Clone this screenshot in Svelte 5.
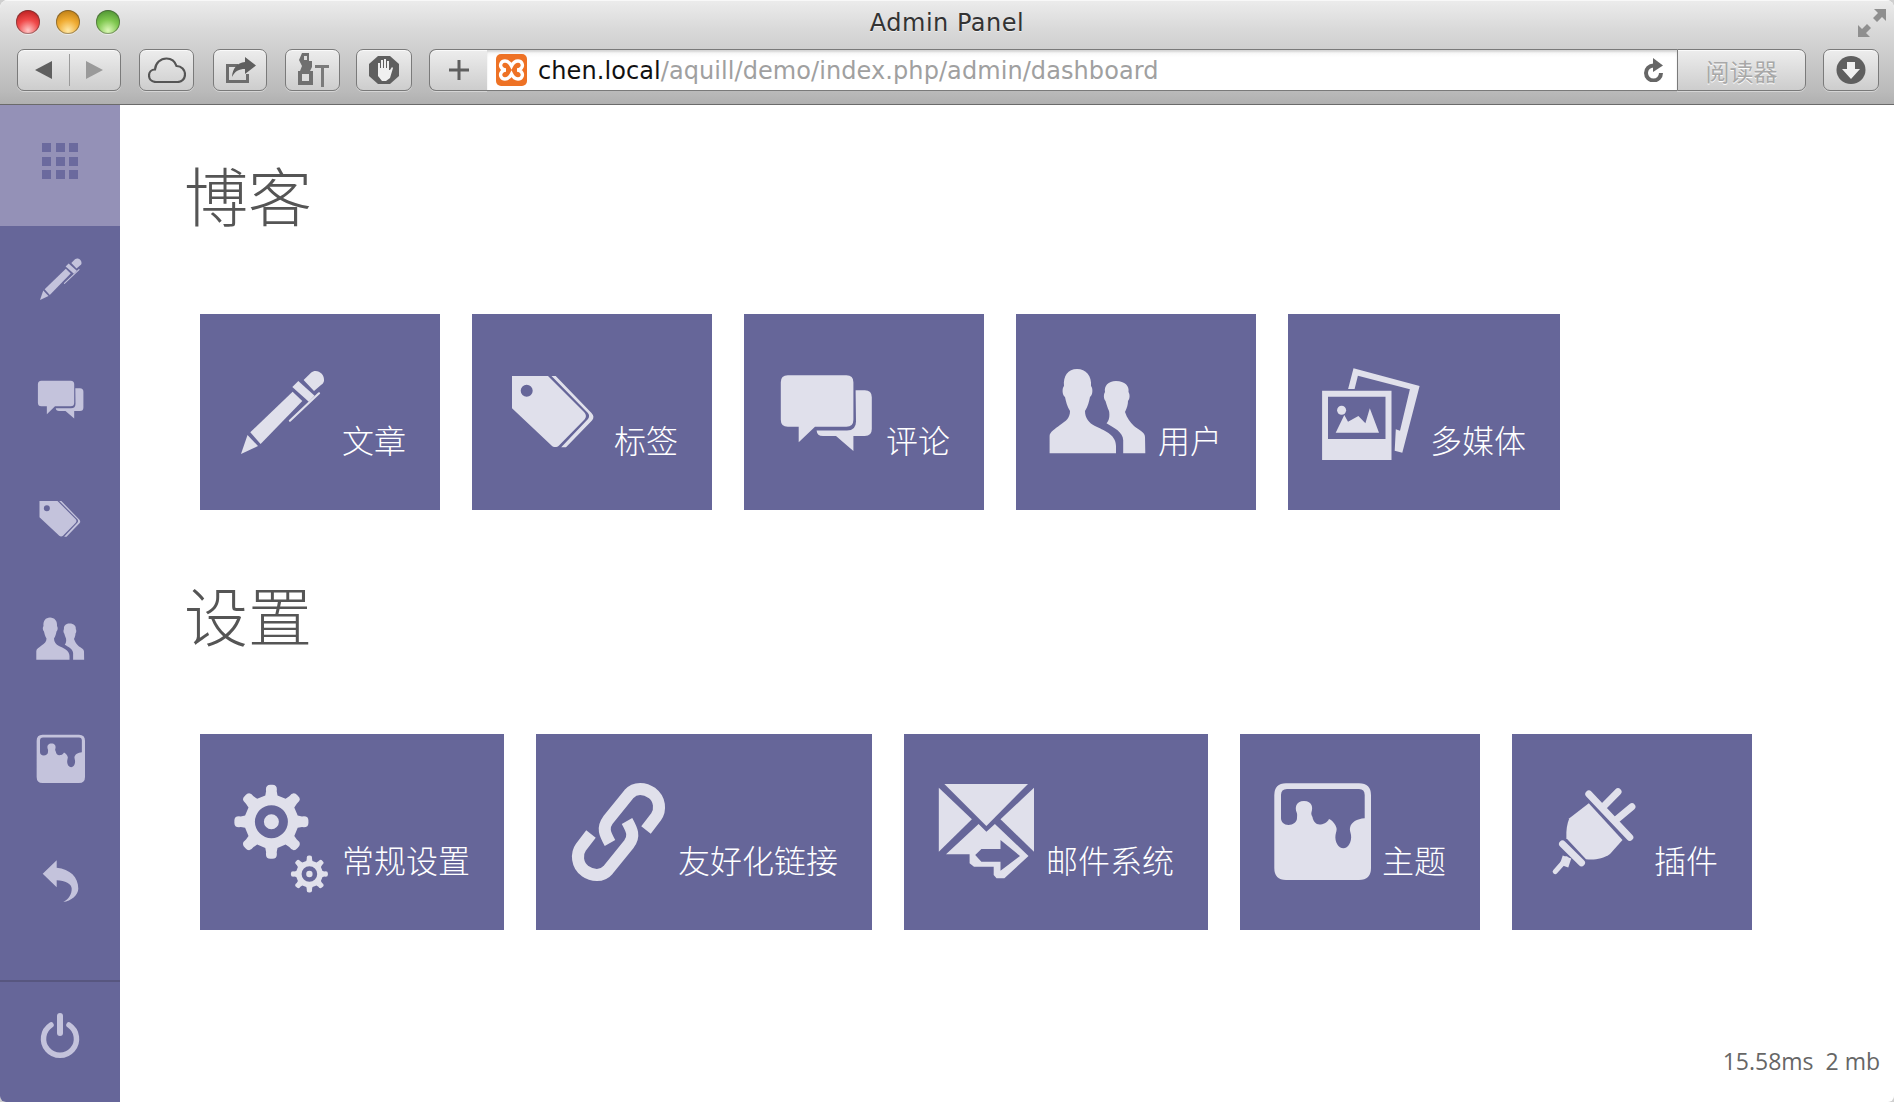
<script>
  // gear outline with rounded teeth, ring hole and centre dot (drawn even-odd)
  function circle(cx, cy, r) {
    return `M${cx - r} ${cy}a${r} ${r} 0 1 0 ${2 * r} 0a${r} ${r} 0 1 0 ${-2 * r} 0Z`;
  }

  function gear(cx, cy, R, r, n, hole, dot) {
    const pt = (a, rad) => `${(cx + Math.cos(a) * rad).toFixed(1)} ${(cy + Math.sin(a) * rad).toFixed(1)}`;
    let d = "";
    for (let i = 0; i < n; i++) {
      const a = (i * 2 * Math.PI) / n - Math.PI / 2;
      const w = 0.17;
      d += `${i ? "L" : "M"}${pt(a - w * 1.35, r)}`;
      d += `L${pt(a - w, R * 0.84)}`;
      d += `Q${pt(a - w, R * 1.03)} ${pt(a, R)}`;
      d += `Q${pt(a + w, R * 1.03)} ${pt(a + w, R * 0.84)}`;
      d += `L${pt(a + w * 1.35, r)}`;
    }
    return d + "Z" + circle(cx, cy, hole) + circle(cx, cy, dot);
  }

  const gearsPath = gear(38.4, 37.7, 37, 27, 8, 16.5, 7.5) + gear(76.4, 90, 18.5, 13.5, 8, 7.8, 3.2);

  const sections = [
    {
      title: "博客",
      items: [
        { icon: "pen", label: "文章" },
        { icon: "tag", label: "标签" },
        { icon: "chat", label: "评论" },
        { icon: "users", label: "用户" },
        { icon: "media", label: "多媒体" },
      ],
    },
    {
      title: "设置",
      items: [
        { icon: "gears", label: "常规设置" },
        { icon: "link", label: "友好化链接" },
        { icon: "mail", label: "邮件系统" },
        { icon: "theme", label: "主题" },
        { icon: "plug", label: "插件" },
      ],
    },
  ];

  const navIcons = ["pen", "chat", "tag", "users", "theme", "back"];
</script>

<svg class="sprite" aria-hidden="true">
  <defs>
    <symbol id="pen" viewBox="0 0 96 96" overflow="visible">
      <path d="M8 90 14.500 71 25 82Z" />
      <path d="M17.300 68.300 59.600 27.700 69.300 37 27.600 80Z" />
      <path d="M65.300 17 59.300 23 75.800 37.700 81.600 31.700Z" />
      <path d="M70.600 16 78 8.700C83 4 92 9 91 17 90.500 19 89.500 20 88 21L81 27Z" />
      <path d="M86 29.300 56.900 56.700" stroke="currentColor" stroke-width="2.200" stroke-linecap="round" fill="none" />
    </symbol>
    <symbol id="tag" viewBox="0 0 96 96" overflow="visible">
      <path fill-rule="evenodd" d="M7 12H43L79 48C81.500 51 81.500 53 79.500 55.500L54 81.500C52 83.500 48.500 83.500 46.500 81.500L7 44.300ZM27.700 26.700a6 6 0 1 0-12 0a6 6 0 1 0 12 0Z" />
      <path d="M46.500 12H50.700L86.500 49C89 51.500 89 54 87 56.500L61 83.300H56.200L83 55C84.500 53 84.500 50.500 82.700 48.700Z" />
    </symbol>
    <symbol id="chat" viewBox="0 0 96 96" overflow="visible">
      <path d="M10.800 11.300H69.400Q76.400 11.300 76.400 18.300V55.700Q76.400 62.700 69.400 62.700H38L21.700 78.300V62.700H10.800Q3.800 62.700 3.800 55.700V18.300Q3.800 11.300 10.800 11.300Z" />
      <path d="M78.600 26.300H87.800Q94.800 26.300 94.800 33.300V65Q94.800 72 87.800 72H76.400V87L59 72H46Q40 72 39.600 66.500H70Q79 66.500 79 57.500Z" />
    </symbol>
    <symbol id="users" viewBox="0 0 96 96" overflow="visible">
      <path d="M.6 89.300V72C.6 68 6 65 11 61 17 57 21 54 21 47 18 42 17 38 16 33 13 31 13 24 15 22 14 12 19 5 28 5 37 5 43 12 42 22 44 24 44 31 41 33 40 38 39 42 36 47 36 54 40 59 46 62 54 66 67 70 67 82V89.300Z" />
      <path d="M74.200 89.300H96.300L96 73C96 68 90 66 85 62 81 58 78 54 76 48 78 44 79 40 79 37 81 35 81 30 79.500 28 80.500 22 76 17 67 17 59 17 55 22 56 28 54.500 30 54.500 35 56.500 37 57.500 40 58.500 44 60 47 61 52 60 57 57.500 59.300 65 64 74 68 74.200 76Z" />
    </symbol>
    <symbol id="media" viewBox="0 0 96 96" overflow="visible">
      <path fill-rule="evenodd" d="M1.100 26.700H70.500V96H1.100ZM7 32.700V75H64.500V32.700Z" />
      <path d="M14.700 68.700 23.300 51 27 57.700 37.400 52 44.400 59.300 48.800 44.300 58 68.700Z" />
      <circle cx="20.600" cy="46.300" r="4.500" />
      <path d="M27.100 25 32.500 4.300 98.600 22 81.300 88.700 73.700 86.700 74.800 65.300 79 66.700 88.900 25.300 36.900 11.700 33.600 25Z" />
    </symbol>
    <symbol id="gears" viewBox="0 0 96 96" overflow="visible">
      <path fill-rule="evenodd" d={gearsPath} />
    </symbol>
    <symbol id="link" viewBox="0 0 96 96" overflow="visible">
      <g fill="none" stroke="currentColor" stroke-width="12">
        <path d="M41 59C36 50 33 44 39 36L60 10C66 3 76 4 83 9 91 15 92 26 87 33L77 46" />
        <path d="M58 37C63 46 66 52 60 60L39 86C33 93 23 92 16 87 8 81 7 70 12 63L22 50" />
      </g>
    </symbol>
    <symbol id="mail" viewBox="0 0 96 96" overflow="visible">
      <path d="M7.400 0H91L49.400 42Z" />
      <path d="M1.800 3.700V67.700L34.900 35.300Z" />
      <path d="M97 3.700V67.700L63.500 35.300Z" />
      <path fill-rule="evenodd" d="M9 70.300 41.600 40 49.400 47.700 57.900 40 91.500 72 67.400 94.300H59.500L56.700 91V82.700H37L32.600 79.300V70.300ZM63.500 56 83 72 63.500 86.700V77.700H44.400L38.200 71 44.400 65H63.500Z" />
    </symbol>
    <symbol id="theme" viewBox="0 0 96 96" overflow="visible">
      <path fill-rule="evenodd" d="M13 -.7H86Q98 -.7 98 11.300V84Q98 96 86 96H13Q1.300 96 1.300 84V11.300Q1.300 -.7 13 -.7ZM8 11Q8 5 14 5H86Q91.700 5 91.700 11V34.300C84 35 78 38 77 44 76.500 46 77.500 48 78 51 79 58 75 64.300 70.400 64.300 65.500 64.300 61.500 58 62.500 51 63 48 64 46 63.500 44 62.500 40 59 36 56 35 54 39 50 40.500 46.500 40.500 43 40.500 40 37 39.500 33 38.500 31 38 30 38.500 28 40 24 39.500 17 31 17 22.500 17 22 24 23.500 28 24.500 30 24 32 24 34 24 38 20 41 15.500 41 11 41 8 38 8 34Z" />
    </symbol>
    <symbol id="plug" viewBox="0 0 96 96" overflow="visible">
      <path d="M43.800 19.300 77.500 56 65 70C58 75 50 76 41 75.300L21.400 54.300C21 46 22 40 24.400 34.300Z" />
      <g fill="none" stroke="currentColor" stroke-linecap="round">
        <path d="M43.800 10 84.800 53.300M73 7.700 59 22M86.900 22.700 71.900 35.300M17.500 60 36.500 78.700" stroke-width="7" />
        <path d="M22 73 19 82" stroke-width="9" stroke-linecap="butt" />
        <path d="M21.400 75 10.200 87.700" stroke-width="5" />
      </g>
    </symbol>
    <symbol id="back" viewBox="0 0 96 96" overflow="visible">
      <path d="M13.400 37.400 41.400 10.600V25.400C68 28 84.600 44 84.600 67.400 84.600 80 70 92 54.600 94 66 88 71.400 78 71.400 67.400 71.400 58 58 50.600 41.400 50.600V64.600Z" />
    </symbol>
    <symbol id="power" viewBox="0 0 96 96" overflow="visible">
      <path d="M30 22A33 33 0 1 0 66 22" fill="none" stroke="currentColor" stroke-width="11" stroke-linecap="round" />
      <path d="M48 4V38" fill="none" stroke="currentColor" stroke-width="12" stroke-linecap="round" />
    </symbol>
  </defs>
</svg>

<div class="window">
  <header class="chrome">
    <div class="titlebar">
      <div class="lights">
        <span class="light red"></span>
        <span class="light amber"></span>
        <span class="light green"></span>
      </div>
      <div class="title">Admin Panel</div>
      <svg class="expand" viewBox="0 0 28 28" width="28" height="28">
        <path d="M28 0H16L20 4 15 9 19 13 24 8 28 12Z" fill="#8f8f8f" />
        <path d="M0 28H12L8 24 13 19 9 15 4 20 0 16Z" fill="#8f8f8f" />
      </svg>
    </div>
    <div class="toolbar">
      <div class="btn nav">
        <span class="half">
          <svg viewBox="0 0 18 20" width="18" height="20"><path d="M18 1V19L1 10Z" fill="#5f5f5f" /></svg>
        </span>
        <span class="half">
          <svg viewBox="0 0 18 20" width="18" height="20"><path d="M0 1V19L17 10Z" fill="#9a9a9a" /></svg>
        </span>
      </div>
      <div class="btn cloud">
        <svg viewBox="0 0 38 26" width="38" height="26">
          <path d="M8 25C3 25 1 21.500 1 18.500 1 15 3.500 12.500 7 12.500 7.500 6 12.500 1.500 18.500 1.500 23.500 1.500 27 4.500 28.500 9 33.500 9 37 13 37 17.500 37 22 33.500 25 29.500 25Z" fill="none" stroke="#555" stroke-width="2.200" />
        </svg>
      </div>
      <div class="btn share">
        <svg viewBox="0 0 31 26" width="31" height="26">
          <path d="M1 7H13V10H4V23H21V17H24V26H1Z" fill="#6d6d6d" />
          <path d="M20 0 31 8.500 20 17V12C14 12 10 14 7 20 7.500 12 12 5.500 20 5Z" fill="#5f5f5f" />
        </svg>
      </div>
      <div class="btn tools">
        <svg viewBox="0 0 33 36" width="33" height="36">
          <path d="M6 1H13V9H16V15L14 19H17V33H2V19H4L6 14 3 8Z" fill="#707070" />
          <path d="M6 22H13V29H6ZM8 4H11V8H8Z" fill="#dcdcdc" />
          <path d="M19 13H33V16H28V35H25V16H19Z" fill="#7a7a7a" />
        </svg>
      </div>
      <div class="btn stop">
        <svg viewBox="0 0 30 28" width="30" height="28">
          <path d="M9 0H21L30 8V20L21 28H9L0 20V8Z" fill="#5f5f5f" />
          <path d="M9 12V7H11V12H12V4H14V12H15V3H17V12H18V5H20V14H21L23 11 24 12 21 22 17 25H13L9 20Z" fill="#f0f0f0" />
        </svg>
      </div>
      <div class="address">
        <div class="btn plus">
          <svg viewBox="0 0 20 20" width="20" height="20"><path d="M8.500 0H11.500V8.500H20V11.500H11.500V20H8.500V11.500H0V8.500H8.500Z" fill="#5f5f5f" /></svg>
        </div>
        <div class="url">
          <svg class="favicon" viewBox="0 0 31 32" width="31" height="32">
            <rect width="31" height="32" rx="5" fill="#ee7225" />
            <path d="M9 7C12 7 14 9 15.500 12 17 9 19 7 22 7 26 7 27 11 26 13 25 15 23 16 21 16 23 16 25 17 26 19 27 21 26 25 22 25 19 25 17 23 15.500 20 14 23 12 25 9 25 5 25 4 21 5 19 6 17 8 16 10 16 8 16 6 15 5 13 4 11 5 7 9 7Z" fill="none" stroke="#fff" stroke-width="3.400" />
          </svg>
          <span class="url-text"><b>chen.local</b>/aquill/demo/index.php/admin/dashboard</span>
          <svg class="reload" viewBox="0 0 21 24" width="21" height="24">
            <path d="M18 15A7.500 7.500 0 1 1 10.500 7.500" fill="none" stroke="#666" stroke-width="4" />
            <path d="M10 0 20 7.500 10 14Z" fill="#666" />
          </svg>
        </div>
        <div class="btn reader">阅读器</div>
      </div>
      <div class="btn download">
        <svg viewBox="0 0 30 28" width="30" height="28">
          <ellipse cx="15" cy="14" rx="14.500" ry="14" fill="#5f5f5f" />
          <path d="M11 6H19V13H24L15 23 6 13H11Z" fill="#f0f0f0" />
        </svg>
      </div>
    </div>
  </header>

  <div class="body">
    <aside class="sidebar">
      <div class="home">
        <div class="grid">
          {#each Array(9) as _}
            <span></span>
          {/each}
        </div>
      </div>
      {#each navIcons as name}
        <div class="nav-item">
          <svg class="icon" width="48" height="48"><use href={`#${name}`} /></svg>
        </div>
      {/each}
      <div class="logout">
        <svg class="icon" width="48" height="48"><use href="#power" /></svg>
      </div>
    </aside>

    <main class="main">
      {#each sections as section}
        <h2>{section.title}</h2>
        <div class="cards">
          {#each section.items as item}
            <a class="card" href="#top">
              <svg class="icon" width="96" height="96"><use href={`#${item.icon}`} /></svg>
              <span class="label">{item.label}</span>
            </a>
          {/each}
        </div>
      {/each}
      <footer class="stats">15.58ms&nbsp;&nbsp;2 mb</footer>
    </main>
  </div>
</div>

<style>
  :global(body) {
    margin: 0;
    background: #cfcfcf;
    font-family: "Noto Sans CJK SC", sans-serif;
  }

  .sprite {
    position: absolute;
    width: 0;
    height: 0;
  }

  .window {
    height: 1102px;
    display: flex;
    flex-direction: column;
    overflow: hidden;
    border-radius: 8px 8px 6px 6px;
    background: #fff;
  }

  .chrome {
    height: 104px;
    flex: none;
    background: linear-gradient(#ececec, #d8d8d8 30%, #bababa 88%, #b0b0b0);
    border-bottom: 1px solid #6a6a6a;
    box-shadow: inset 0 1px 0 #f8f8f8;
  }

  .titlebar {
    height: 49px;
    display: flex;
    align-items: flex-start;
    position: relative;
  }

  .lights {
    display: flex;
    gap: 16px;
    padding: 10px 0 0 16px;
  }

  .light {
    width: 24px;
    height: 24px;
    border-radius: 50%;
    box-shadow: inset 0 0 0 1px rgba(60, 60, 60, 0.45), 0 1px 0 rgba(255, 255, 255, 0.5);
  }

  .red {
    background: radial-gradient(circle at 50% 85%, #ffc8c8, #f04a4a 45%, #b81c1c 90%);
  }

  .amber {
    background: radial-gradient(circle at 50% 85%, #ffe9a8, #f0ac33 45%, #b97a12 90%);
  }

  .green {
    background: radial-gradient(circle at 50% 85%, #dcf8b8, #80c850 45%, #4a9030 90%);
  }

  .title {
    position: absolute;
    left: 0;
    right: 0;
    top: 8px;
    text-align: center;
    font: 400 24px/30px "DejaVu Sans", sans-serif;
    letter-spacing: 0.5px;
    color: #333;
    text-shadow: 0 1px 0 rgba(255, 255, 255, 0.6);
  }

  .expand {
    position: absolute;
    top: 9px;
    right: 8px;
  }

  .toolbar {
    height: 42px;
    display: flex;
    padding-left: 17px;
  }

  .btn {
    box-sizing: border-box;
    height: 42px;
    flex: none;
    display: flex;
    align-items: center;
    justify-content: center;
    border: 1px solid #7a7a7a;
    border-radius: 7px;
    background: linear-gradient(#ededed, #cdcdcd);
    box-shadow: inset 0 1px 0 #fafafa, 0 1px 0 rgba(255, 255, 255, 0.4);
  }

  .nav {
    width: 104px;
    margin-right: 18px;
  }

  .half {
    flex: 1;
    height: 32px;
    display: flex;
    align-items: center;
    justify-content: center;
  }

  .half:first-child {
    border-right: 1px solid #9a9a9a;
  }

  .cloud {
    width: 55px;
    margin-right: 19px;
  }

  .share {
    width: 54px;
    margin-right: 18px;
  }

  .tools {
    width: 55px;
    margin-right: 16px;
  }

  .stop {
    width: 56px;
    margin-right: 17px;
  }

  .address {
    display: flex;
    width: 1377px;
    flex: none;
  }

  .plus {
    width: 58px;
    border-radius: 7px 0 0 7px;
    border-right: 0;
  }

  .url {
    flex: 1;
    box-sizing: border-box;
    height: 42px;
    display: flex;
    align-items: center;
    padding: 0 13px 0 9px;
    border: 1px solid #7a7a7a;
    border-width: 1px 0;
    background: linear-gradient(#f2f2f2, #fff 18%, #fff);
    box-shadow: inset 0 2px 2px rgba(0, 0, 0, 0.12);
  }

  .favicon {
    flex: none;
    margin-right: 11px;
  }

  .url-text {
    flex: 1;
    padding-top: 2px;
    font: 400 24px/30px "DejaVu Sans", sans-serif;
    letter-spacing: 0.08px;
    color: #a0a0a0;
    white-space: nowrap;
  }

  .url-text b {
    font-weight: 400;
    color: #111;
  }

  .reader {
    width: 129px;
    border-radius: 0 7px 7px 0;
    font-size: 24px;
    font-weight: 400;
    color: #a8a8a8;
    text-shadow: 0 1px 0 #fff;
  }

  .download {
    width: 56px;
    margin-left: 17px;
  }

  .body {
    flex: 1;
    min-height: 0;
    display: flex;
  }

  .sidebar {
    width: 120px;
    flex: none;
    display: flex;
    flex-direction: column;
    background: #666699;
    color: #c4c3dc;
  }

  .icon {
    display: block;
    overflow: visible;
    fill: currentColor;
  }

  .home {
    height: 121px;
    flex: none;
    box-sizing: border-box;
    padding: 38px 0 0 42px;
    background: #9491b7;
  }

  .grid {
    display: grid;
    grid-template-columns: repeat(3, 9px);
    grid-auto-rows: 9px;
    gap: 4.500px;
  }

  .grid span {
    background: #6b6a9e;
  }

  .nav-item {
    height: 120px;
    flex: none;
    box-sizing: border-box;
    padding: 29px 0 0 36px;
  }

  .nav-item:last-of-type {
    padding-top: 27px;
  }

  .logout {
    margin-top: auto;
    height: 122px;
    flex: none;
    box-sizing: border-box;
    padding: 32px 0 0 36px;
    border-top: 2px solid #57567f;
  }

  .main {
    flex: 1;
    min-width: 0;
    display: flex;
    flex-direction: column;
    padding: 56px 0 0 64px;
  }

  h2 {
    margin: 0;
    font-size: 64px;
    line-height: 64px;
    font-weight: 300;
    color: #555;
  }

  .cards {
    display: flex;
    gap: 32px;
    margin: 89px 0 71px 16px;
  }

  .card {
    display: flex;
    align-items: flex-start;
    height: 196px;
    box-sizing: border-box;
    padding: 50px 34px 0 33px;
    background: #666699;
    color: #e0e0eb;
    text-decoration: none;
  }

  .label {
    margin: 57px 0 0 13px;
    font-size: 32px;
    line-height: 36px;
    font-weight: 300;
    color: #fff;
    white-space: nowrap;
  }

  .stats {
    margin-top: auto;
    align-self: flex-end;
    padding: 0 14px 26px 0;
    font: 400 23px/30px "Open Sans", sans-serif;
    color: #666;
  }
</style>
